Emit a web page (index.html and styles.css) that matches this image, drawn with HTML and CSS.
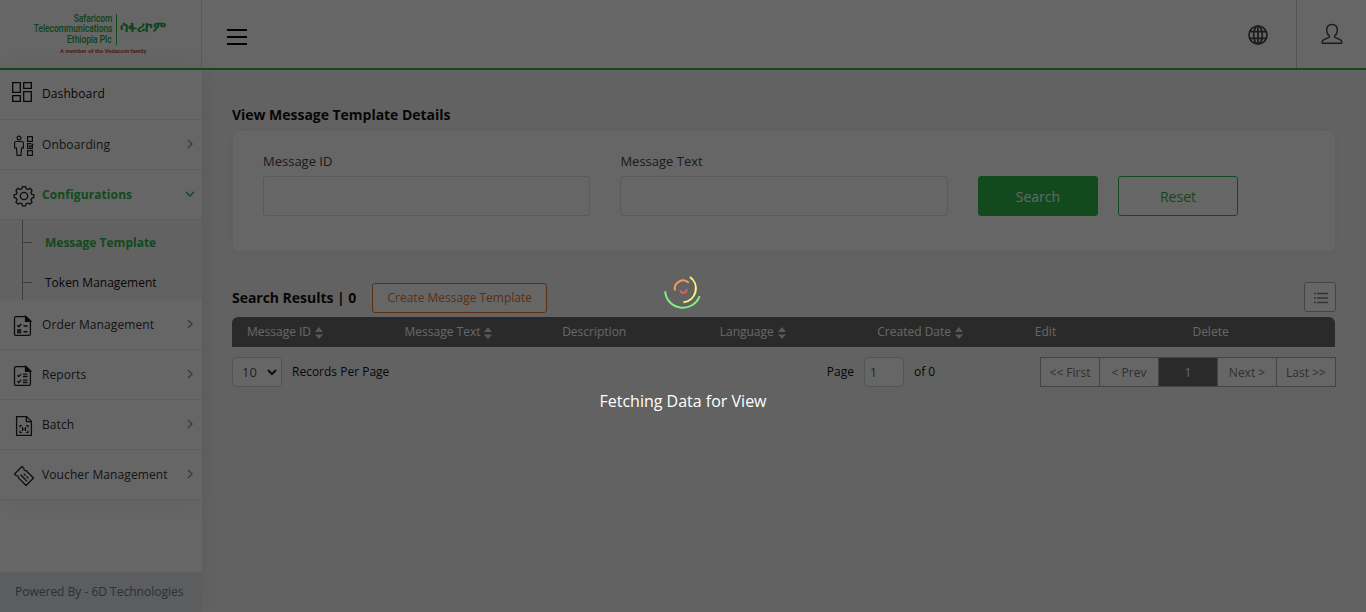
FILE: index.html
```html
<!DOCTYPE html>
<html lang="en">
<head>
<meta charset="utf-8">
<title>View Message Template Details</title>
<link rel="stylesheet" href="styles.css">
</head>
<body>
<svg width="0" height="0" class="defs">
  <defs>
    <symbol id="chev" viewBox="0 0 6 10"><path d="M1 1l4 4-4 4" fill="none" stroke="#8a969f" stroke-width="1.5"/></symbol>
    <symbol id="sort" viewBox="0 0 8 12"><path d="M0 5l4-5 4 5zM0 7.500h8l-4 4.500z" fill="#ddd"/></symbol>
  </defs>
</svg>
<header class="header">
  <div class="logo">
    <div class="logo-top">
      <div class="logo-name"><span>Safaricom</span><span>Telecommunications</span><span>Ethiopia Plc</span></div>
      <div class="logo-local">ሳፋሪኮም</div>
    </div>
    <div class="logo-tag">A member of the Vodacom family</div>
  </div>
  <div class="burger"><span></span><span></span><span></span></div>
  <div class="lang">
    <svg width="20" height="20" viewBox="0 0 20 20" fill="none" stroke="#444" stroke-width="1.700"><circle cx="10" cy="10" r="9"/><ellipse cx="10" cy="10" rx="4.300" ry="9"/><path d="M10 1v18M2 6.700h16M2 13.300h16"/></svg>
  </div>
  <div class="user">
    <svg width="22" height="22" viewBox="0 0 22 22" fill="none" stroke="#444" stroke-width="1.400" stroke-linejoin="round"><path d="M11 1.500c3.400 0 5.300 2.300 5.300 5.500 0 2.600-.9 4.600-2.500 5.700-.5.400-.5 1.300.1 1.600l5.600 2.600c.8.400 1.200.9 1.200 1.700v1.700H1.300v-1.700c0-.8.400-1.300 1.200-1.700l5.600-2.600c.6-.3.600-1.200.1-1.600C6.600 11.600 5.700 9.600 5.700 7c0-3.200 1.900-5.500 5.300-5.500z"/></svg>
  </div>
</header>
<div class="body">
  <aside class="sidebar">
    <nav class="menu">
      <div class="item dash">
        <svg class="ico" width="22" height="22" viewBox="0 0 22 22" fill="none" stroke="#111" stroke-width="1.300"><path d="M1.700 1.700h7.600v9.600H1.700zM12.700 1.700h7.600v5.600h-7.600zM1.700 14.700h7.600v5.600H1.700zM12.700 10.700h7.600v9.600h-7.600z"/></svg>
        <span class="label">Dashboard</span>
      </div>
      <div class="item">
        <svg class="ico" width="22" height="22" viewBox="0 0 22 22" fill="none" stroke="#222" stroke-width="1.200"><circle cx="6" cy="3" r="1.900"/><path d="M3.300 6.500h5.400c1 0 1.700.7 1.700 1.700v4.600H8.600L8 20.400H4l-.6-7.600H1.600V8.200c0-1 .7-1.700 1.700-1.700zM14.600 1.600h4.800v4.800h-4.800zM19.400 10v3.400h-4.800V8.600h3.800M14.600 15.600h4.800v4.800h-4.800z"/><path d="M16 10.500l1.200 1.400 3.300-3.200"/></svg>
        <span class="label">Onboarding</span><svg class="chev" width="6" height="10"><use href="#chev"/></svg>
      </div>
      <div class="item active">
        <svg class="ico" width="22" height="22" viewBox="0 0 22 22" fill="none" stroke="#222" stroke-width="1.300" stroke-linejoin="round"><circle cx="11" cy="11" r="3.700"/><path d="M9.400 1.600h3.200l.6 2.200 1.700.7 2-1.200 2.200 2.200-1.200 2 .7 1.700 2.200.6v2.800l-2.200.7-.7 1.700 1.200 2-2.200 2.200-2-1.200-1.700.7-.6 2.100H9.400l-.6-2.100-1.700-.7-2 1.200-2.200-2.200 1.200-2-.7-1.700-2.200-.7V9.800l2.200-.6.700-1.700-1.200-2 2.200-2.200 2 1.200 1.700-.7z"/></svg>
        <span class="label">Configurations</span>
        <svg class="chev down" width="10" height="6" viewBox="0 0 10 6"><path d="M.8.800L5 5 9.200.8" fill="none" stroke="#2db94b" stroke-width="1.500"/></svg>
      </div>
      <div class="submenu">
        <div class="tree"><i></i><i></i></div>
        <div class="sublist">
          <div class="sub current">Message Template</div>
          <div class="sub">Token Management</div>
        </div>
      </div>
      <div class="item">
        <svg class="ico" width="22" height="22" viewBox="0 0 22 22" fill="none" stroke="#222" stroke-width="1.300"><path d="M3 1.600h10l4.400 4.200v13.100c0 .9-.5 1.500-1.400 1.500H3c-.9 0-1.500-.6-1.500-1.500V3c0-.9.600-1.400 1.500-1.400z"/><path d="M12.500 1.300v5h5.200z" fill="#111"/><path d="M4.300 10.200l1.500 1.500 2.500-2.800M10.500 11h4M4.900 15h2.500v2.400H4.900zM10.500 16.800h4" stroke-width="1.500"/></svg>
        <span class="label">Order Management</span><svg class="chev" width="6" height="10"><use href="#chev"/></svg>
      </div>
      <div class="item">
        <svg class="ico" width="22" height="22" viewBox="0 0 22 22" fill="none" stroke="#222" stroke-width="1.300"><path d="M3 1.600h10l4.400 4.200v13.100c0 .9-.5 1.500-1.400 1.500H3c-.9 0-1.500-.6-1.500-1.500V3c0-.9.600-1.400 1.500-1.400z"/><path d="M12.500 1.300v5h5.200z" fill="#111"/><path d="M4.300 10.200l1.500 1.300 2.500-2.600M4.300 16.200l1.500 1.300 2.500-2.600M10 9.200h4.500M10 11.500h4.500M10 15.200h4.500M10 17.500h4.500"/></svg>
        <span class="label">Reports</span><svg class="chev" width="6" height="10"><use href="#chev"/></svg>
      </div>
      <div class="item">
        <svg class="ico" width="22" height="22" viewBox="0 0 22 22" fill="none" stroke="#222" stroke-width="1.300"><path d="M3.600 1.600h10l4.800 4.800v14H3.600zM13.400 1.600v5h5"/><path stroke-width="1.200" d="M9 10.500H7v2M13 10.500h2v2M9 17.500H7v-2M13 17.500h2v-2M9.500 12v4M12.500 12v4M9 14h4"/></svg>
        <span class="label">Batch</span><svg class="chev" width="6" height="10"><use href="#chev"/></svg>
      </div>
      <div class="item">
        <svg class="ico" width="22" height="22" viewBox="0 0 22 22" fill="none" stroke="#222" stroke-width="1.200" stroke-linejoin="round"><path d="M1.500 9l7.500-7.500 2 2c-.5 1.300.7 2.300 2 2l7.500 7.500-7.500 7.500-7.500-7.700c.3-1.300-.7-2.300-2-2z"/><path d="M7.500 9.500l6.500 6.800M10.800 8.800l1.800 1.800M13.500 11.500l1.800 1.800"/></svg>
        <span class="label">Voucher Management</span><svg class="chev" width="6" height="10"><use href="#chev"/></svg>
      </div>
    </nav>
    <div class="powered">Powered By - 6D Technologies</div>
  </aside>
  <main class="main">
    <h1 class="title">View Message Template Details</h1>
    <section class="card">
      <label class="field"><span>Message ID</span><input type="text"></label>
      <label class="field"><span>Message Text</span><input type="text"></label>
      <button class="btn search">Search</button>
      <button class="btn reset">Reset</button>
    </section>
    <div class="results">
      <h2 class="count">Search Results | 0</h2>
      <button class="create">Create Message Template</button>
      <button class="listbtn"><svg width="14" height="12" viewBox="0 0 14 12" stroke="#808080" stroke-width="1.400"><path d="M0 1.500h2M3 1.500h11M0 6h2M3 6h11M0 10.500h2M3 10.500h11"/></svg></button>
    </div>
    <div class="thead">
      <div>Message ID<svg width="8" height="12"><use href="#sort"/></svg></div>
      <div>Message Text<svg width="8" height="12"><use href="#sort"/></svg></div>
      <div>Description</div>
      <div>Language<svg width="8" height="12"><use href="#sort"/></svg></div>
      <div>Created Date<svg width="8" height="12"><use href="#sort"/></svg></div>
      <div>Edit</div>
      <div>Delete</div>
    </div>
    <div class="pager">
      <div class="select">10<svg width="10" height="7" viewBox="0 0 10 7"><path d="M1 1l4 4 4-4" fill="none" stroke="#222" stroke-width="2"/></svg></div>
      <span class="rpp">Records Per Page</span>
      <span class="pg">Page</span>
      <div class="pageno">1</div>
      <span class="of">of 0</span>
      <div class="pages"><span>&lt;&lt; First</span><span>&lt; Prev</span><span class="on">1</span><span>Next &gt;</span><span>Last &gt;&gt;</span></div>
    </div>
  </main>
</div>
<div class="overlay">
  <svg class="spinner" width="40" height="40" viewBox="0 0 40 40" fill="none" stroke-width="2">
    <path d="M2.200 21.200A17.700 17.200 0 0 0 36.600 26.200" stroke="#80f07c"/>
    <path d="M27 7A14 14 0 0 1 20.500 32.300" stroke="#f8f67c"/>
    <path d="M12 20.500A8.200 8.200 0 0 1 25.700 12.800" stroke="#f59a5e"/>
    <path d="M17.200 20.400A3.200 3.200 0 0 0 23.500 19" stroke="#d9635c"/>
  </svg>
  <div class="msg">Fetching Data for View</div>
</div>
</body>
</html>
```

FILE: styles.css
```css
* { box-sizing: border-box; }
body { margin: 0; width: 1366px; height: 612px; overflow: hidden; background: #f6f6f6; font-family: "Open Sans", sans-serif; font-size: 12px; color: #111; display: flex; flex-direction: column; }
.defs { position: absolute; }
svg { display: block; flex: none; }
.header { height: 70px; flex: none; display: flex; align-items: stretch; background: #fff; border-bottom: 2px solid #2db94b; }
.logo { width: 202px; border-right: 1px solid #d4e2df; padding-top: 14px; }
.logo-top { display: flex; padding-left: 32px; height: 31px; }
.logo-name { width: 85px; height: 31px; border-right: 1px solid #2db94b; padding-right: 4px; white-space: nowrap; font-family: Roboto, sans-serif; font-weight: 500; font-size: 10.5px; line-height: 10.4px; color: #2aa547; display: flex; flex-direction: column; align-items: flex-end; }
.logo-name span { transform: scaleX(.8); transform-origin: right; }
.logo-local { color: #2aa547; font-weight: bold; font-size: 14px; line-height: 26px; padding-left: 3px; white-space: nowrap; }
.logo-tag { font-family: "Liberation Sans", sans-serif; font-weight: bold; font-size: 5.500px; line-height: 7px; margin: 3px 0 0 60px; color: #c93232; white-space: nowrap; }
.burger { display: flex; flex-direction: column; gap: 5px; padding: 29px 0 0 25px; }
.burger span { width: 20px; height: 2px; background: #000; }
.lang { margin-left: auto; width: 48px; padding: 25px 0 0 0; }
.user { width: 70px; border-left: 1px solid #c0d8d2; padding: 23px 0 0 24px; }
.body { flex: 1; display: flex; min-height: 0; }
.sidebar { width: 202px; flex: none; background: #fff; display: flex; flex-direction: column; justify-content: space-between; box-shadow: 0 0 30px rgba(0,0,0,.08); }
.menu { box-shadow: 0 8px 20px rgba(0,0,0,.04); }
.item { height: 50px; border-bottom: 1px solid #ececec; display: flex; align-items: center; padding: 0 9px 0 13px; }
.item .ico { margin-top: 3px; }
.item .label { margin-left: 7px; margin-top: -1px; color: #333; letter-spacing: .1px; white-space: nowrap; }
.item.dash { padding-left: 11px; }
.item.dash .ico { margin-top: -5px; }
.item.dash .label { margin-left: 9px; margin-top: -3px; color: #111; }
.chev { margin-left: auto; margin-top: -1px; }
.chev.down { margin-right: -2px; }
.item.active .label { color: #2db94b; font-weight: bold; }
.submenu { background: #f4f4f4; height: 80px; display: flex; }
.tree { width: 32px; padding-left: 22px; }
.tree i { display: block; height: 40px; border-left: 1px solid #999; }
.tree i::before { content: ""; display: block; width: 9px; height: 22px; border-bottom: 1px solid #999; }
.sublist { padding-left: 13px; }
.sub { height: 40px; line-height: 45px; white-space: nowrap; }
.sub.current { color: #2db94b; font-weight: bold; }
.powered { height: 40px; line-height: 39px; background: #e4e8ec; padding-left: 15px; color: #6d7886; white-space: nowrap; }
.main { flex: 1; padding: 34px 31px 0 30px; display: flex; flex-direction: column; }
.title, .count { margin: 0; font-size: 14px; font-weight: 700; line-height: 22px; color: #111; white-space: nowrap; letter-spacing: -.03px; }
.card { margin: 5px 0 0 1px; height: 120px; background: #fff; border-radius: 6px; box-shadow: 0 0 12px rgba(0,0,0,.06); padding: 20px 0 0 30px; display: flex; align-items: flex-start; }
.field { width: 327.400px; margin-right: 30px; color: #444; font-size: 13px; display: block; }
.field + .field { margin-right: 30.200px; }
.field span { display: block; line-height: 20px; height: 25px; }
.field input { display: block; width: 100%; height: 40px; border: 1px solid #e0e0e0; border-radius: 3px; background: #fff; }
.btn { font: 14px "Open Sans", sans-serif; width: 120px; height: 40px; margin: 25px 20px 0 0; border: 1px solid #2db94b; border-radius: 3px; background: #fff; color: #2db94b; }
.btn.search { background: #2db94b; color: #fff; }
.results { height: 30px; margin: 31px -1px 5px 0; display: flex; align-items: center; }
.count { margin-top: 1px; }
.create { font: 12px "Open Sans", sans-serif; width: 175px; height: 30px; margin: 1px 0 0 16px; padding: 0; border: 1px solid #e87722; border-radius: 3px; background: #fff; color: #e87722; white-space: nowrap; }
.listbtn { margin-left: auto; width: 32px; height: 30px; padding: 1px 0 0 1px; display: flex; align-items: center; justify-content: center; background: #fff; border: 1px solid #aaa; border-radius: 3px; }
.thead { height: 30px; background: #6a6a6a; color: #fff; border-radius: 6px 6px 0 0; display: grid; grid-template-columns: repeat(7, 1fr); line-height: 28px; }
.thead div { height: 29px; padding-left: 15px; display: flex; align-items: center; white-space: nowrap; }
.thead svg { margin: 3px 0 0 4px; }
.pager { height: 30px; margin: 10px -1px 0 0; display: flex; line-height: 29px; }
.select { width: 50px; border: 1px solid #ccd0d6; border-radius: 4px; background: #fff; padding: 0 4px 0 9px; display: flex; align-items: center; justify-content: space-between; color: #555; font-size: 13px; }
.rpp { margin-left: 10px; }
.pg { margin-left: auto; }
.pageno { width: 40px; border: 1px solid #ccd0d6; border-radius: 4px; background: #fff; margin: 0 10px; padding-left: 5px; color: #555; }
.of { width: 126px; }
.pages { display: flex; border: 1px solid #aaa; background: #fff; width: 296px; }
.pages span { flex: 1; text-align: center; color: #777; border-left: 1px solid #aaa; white-space: nowrap; }
.pages span:first-child { border-left: 0; }
.pages .on { background: #6a6a6a; color: #fff; }
.overlay { position: absolute; inset: 0; background: rgba(0,0,0,.6); display: flex; flex-direction: column; align-items: center; }
.spinner { margin-top: 270px; }
.msg { margin-top: 80px; font-size: 16px; line-height: 22px; color: #fff; }
```
